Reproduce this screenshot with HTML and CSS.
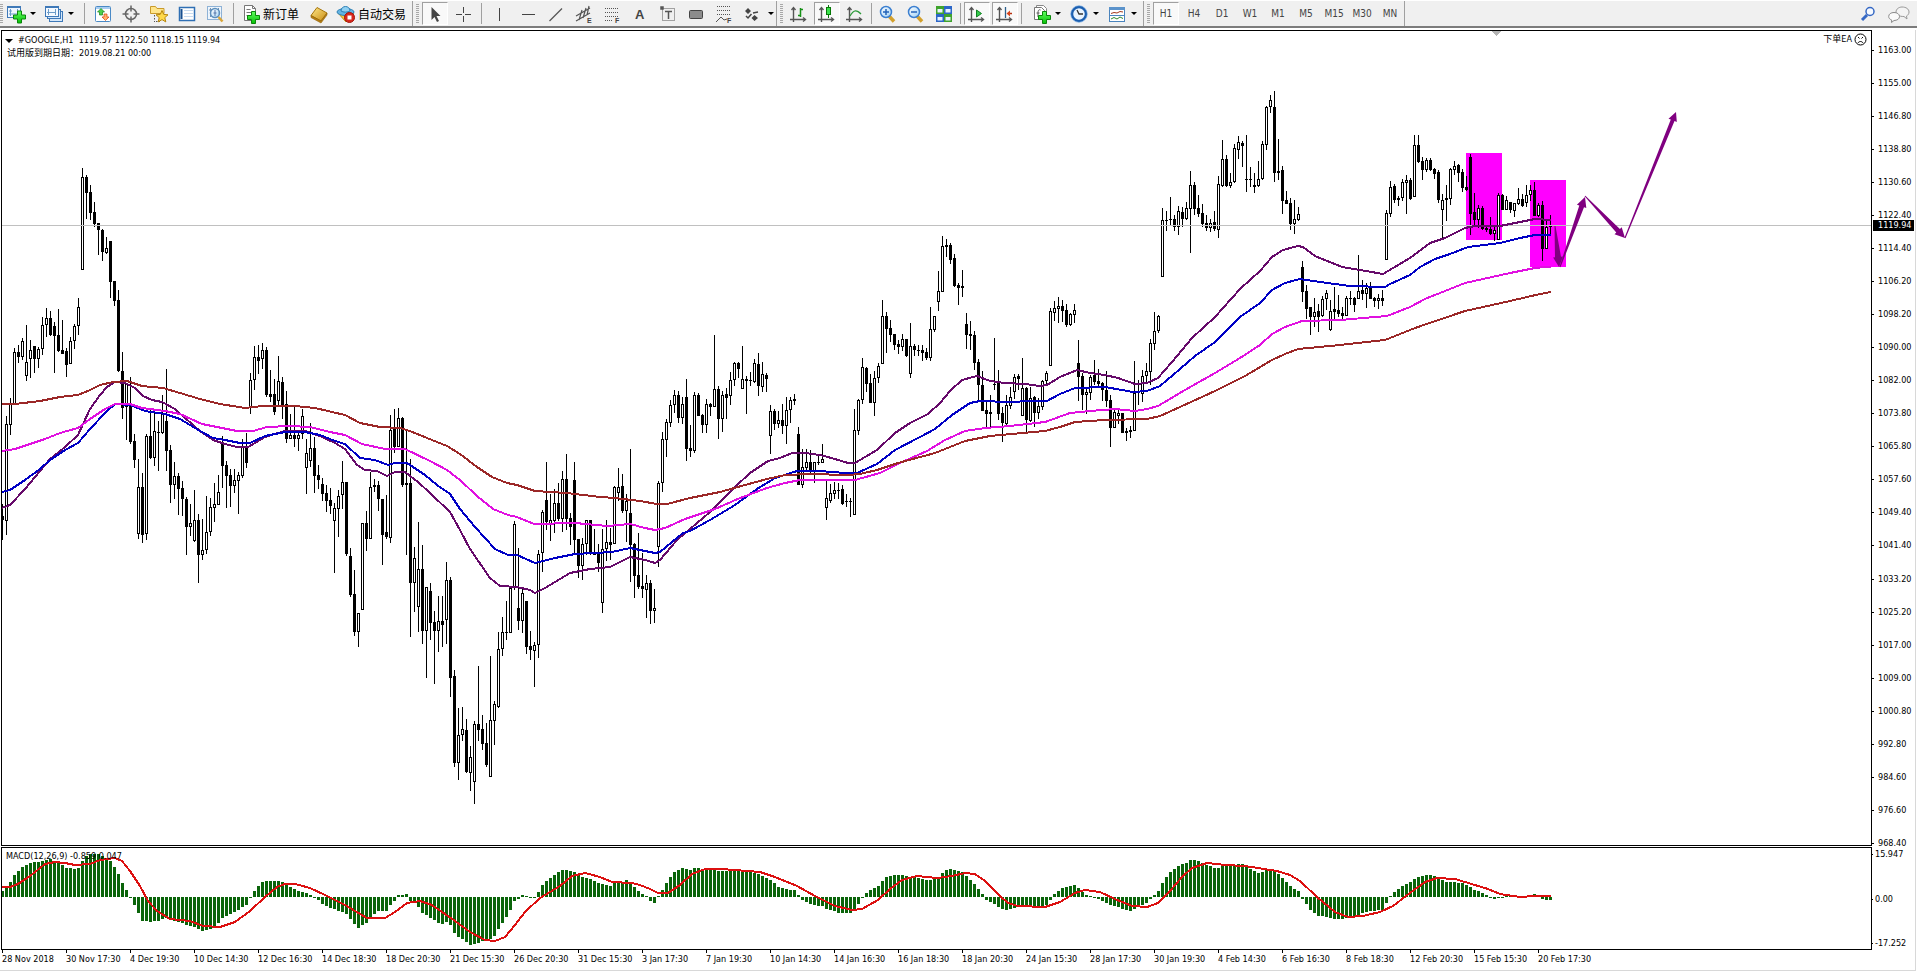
FILE: index.html
```html
<!DOCTYPE html>
<html lang="zh-CN">
<head>
<meta charset="utf-8">
<meta name="viewport" content="width=device-width, initial-scale=1">
<title>#GOOGLE,H1</title>
<link rel="stylesheet" href="styles.css">
</head>
<body>
<svg class="defs" aria-hidden="true">
  <defs>
    <linearGradient id="gold" x1="0" y1="0" x2="1" y2="1"><stop offset="0" stop-color="#ffe98a"/><stop offset="1" stop-color="#c88a10"/></linearGradient>
    <linearGradient id="green" x1="0" y1="0" x2="0" y2="1"><stop offset="0" stop-color="#5fff5f"/><stop offset="1" stop-color="#06c006"/></linearGradient>
    <linearGradient id="lens" x1="0" y1="0" x2="1" y2="1"><stop offset="0" stop-color="#ffffff"/><stop offset="1" stop-color="#9ed0f5"/></linearGradient>
    <path id="plus" d="M4 0h4v4h4v4h-4v4h-4v-4h-4v-4h4z" fill="url(#green)" stroke="#0b860b"/>
    <g id="axes" fill="none" stroke="#555" stroke-width="1.4"><path d="M4.5 4v14M1 15.500h15"/><path d="M2.500 6l2-2.500 2 2.500M14 13.500l2.500 2-2.500 2"/></g>
  </defs>
</svg>

<header class="toolbar">
  <div class="group">
    <span class="grip"></span>
    <div class="combos first">
      <div class="combo">
        <button class="tool" aria-label="新图表"><svg viewBox="0 0 20 20"><rect x="1.500" y="2.500" width="13" height="11" fill="#eef6ff" stroke="#3f79b8"/><path d="M1 3h14" stroke="#3f79b8" stroke-width="2"/><path d="M4.500 5v7M3 7h3M11.500 5v7M3 10h9" stroke="#6d9cc8" fill="none"/><use href="#plus" x="7.500" y="7"/></svg></button>
        <button class="drop" aria-label="新图表菜单"></button>
      </div>
      <div class="combo">
        <button class="tool" aria-label="配置文件"><svg viewBox="0 0 20 20"><rect x="5.500" y="7.500" width="13" height="10" fill="#d6e8fa" stroke="#3f79b8"/><rect x="3.500" y="5.500" width="13" height="9" fill="#d6e8fa" stroke="#3f79b8"/><rect x="1.500" y="2.500" width="13" height="10" fill="#f4f9ff" stroke="#3f79b8"/><path d="M1 3h14" stroke="#3f79b8" stroke-width="2"/><path d="M4.500 5v6M11.500 5v6M3 8.500h9" stroke="#6d9cc8"/></svg></button>
        <button class="drop" aria-label="配置文件菜单"></button>
      </div>
    </div>
    <span class="sep"></span>
    <button class="tool" aria-label="市场报价"><svg viewBox="0 0 20 20"><rect x="2.500" y="2.500" width="15" height="15" rx="1" fill="#fff" stroke="#4a8ac6"/><rect x="3" y="3" width="14" height="2" fill="#a9cdf0"/><path d="M8 4.500l3.500 3.500h-2v3h-3v-3h-2z" fill="#4cd04c" stroke="#17851a" stroke-width=".7"/><path d="M12.500 16.500l3.500-3.500h-2v-3h-3v3h-2z" fill="#ffb06a" stroke="#d8420c" stroke-width=".7"/></svg></button>
    <button class="tool" aria-label="数据窗口"><svg viewBox="0 0 20 20"><circle cx="10" cy="10" r="5.500" fill="none" stroke="#666" stroke-width="1.500"/><path d="M10 1.500v6M10 12.500v6M1.500 10h6M12.500 10h6" stroke="#666" stroke-width="1.500"/></svg></button>
    <button class="tool" aria-label="导航"><svg viewBox="0 0 20 20"><path d="M1.500 9.500v-7h5l1.500 2h7v5z" fill="#ffe58a" stroke="#c99a2a"/><path d="M5.500 11v7M7 17.500h4" stroke="#555" stroke-dasharray="1.500 1.500"/><path d="M13 6.500l1.700 3.900 4.300.4-3.200 2.800 1 4.300-3.800-2.300-3.800 2.300 1-4.300-3.200-2.800 4.300-.4z" fill="#ffd94a" stroke="#b8860b"/></svg></button>
    <button class="tool" aria-label="终端"><svg viewBox="0 0 20 20"><rect x="2.500" y="3.500" width="15" height="13" fill="#fff" stroke="#2f6fb4" stroke-width="1.500"/><path d="M4.500 5v10" stroke="#174f90" stroke-width="2"/><path d="M7 6.500h9M7 9.500h9M7 12.500h9" stroke="#c8dbf0"/></svg></button>
    <button class="tool" aria-label="策略测试"><svg viewBox="0 0 20 20"><rect x="2.500" y="2.500" width="14" height="13" fill="#eef5fc" stroke="#8eb2d6"/><path d="M5.500 4v9M4 6h3M13.500 4v7" stroke="#7092b5"/><circle cx="10" cy="9" r="4.500" fill="url(#lens)" fill-opacity=".8" stroke="#5d8fbd" stroke-width="1.500"/><path d="M10 6v6M8.500 9h3" stroke="#5577aa"/><path d="M13.500 13l4 4.500" stroke="#d9a53a" stroke-width="2.500"/></svg></button>
    <span class="sep"></span>
    <button class="tool labelled"><svg viewBox="0 0 20 20"><path d="M3.500 1.500h8l3 3v12h-11z" fill="#fff" stroke="#777"/><path d="M11.500 1.500v3h3M5.500 5.500h4M5.500 8.500h7M5.500 11.500h4" fill="none" stroke="#777"/><use href="#plus" x="6.500" y="7.500"/></svg><span>新订单</span></button>
    <button class="tool" aria-label="编辑器"><svg viewBox="0 0 20 20"><path d="M2 11.500l6-8 10 5.500-6 8z" fill="url(#gold)" stroke="#a8760c"/><path d="M2 11.500v2l10 5.500 6-8v-2l-6 8z" fill="#b97f10" stroke="#8f620a" stroke-width=".6"/></svg></button>
    <button class="tool labelled"><svg viewBox="0 0 20 20"><path d="M2 9l8 9 8-9z" fill="#f4c93c" stroke="#c08a14"/><ellipse cx="9.500" cy="8" rx="8.500" ry="3.500" fill="#63b4e4" stroke="#2c7fb4"/><path d="M5 7c0-6 9-6 9 0-2 1.500-7 1.500-9 0z" fill="#8fd0f2" stroke="#2c7fb4"/><circle cx="13.500" cy="13.500" r="5" fill="#d9281c" stroke="#a31108"/><rect x="11.500" y="11.500" width="4" height="4" fill="#fff"/></svg><span>自动交易</span></button>
  </div>

  <div class="group">
    <span class="grip"></span>
    <button class="tool pressed" aria-label="光标"><svg viewBox="0 0 20 20"><path d="M6.500 3v13l3-3 2.500 5 2-1-2.500-5h4z" fill="#444"/></svg></button>
    <button class="tool" aria-label="十字准线"><svg viewBox="0 0 20 20"><path d="M10.500 3v6M10.500 12v6M3 10.500h6M12 10.500h6" stroke="#444"/></svg></button>
    <span class="sep"></span>
    <button class="tool" aria-label="垂直线"><svg viewBox="0 0 20 20"><path d="M9.500 4v13" stroke="#444"/></svg></button>
    <button class="tool" aria-label="水平线"><svg viewBox="0 0 20 20"><path d="M4 10.500h13" stroke="#444"/></svg></button>
    <button class="tool" aria-label="趋势线"><svg viewBox="0 0 20 20"><path d="M3.500 17L16 4.500" stroke="#555" stroke-width="1.300"/></svg></button>
    <button class="tool" aria-label="等距通道"><svg viewBox="0 0 20 20"><path d="M2 12L16 4M2 17L16 9M5 16l3-10M9 14l3-10M13 11l2-9" stroke="#555" stroke-width="1.200"/><text x="13" y="19">E</text></svg></button>
    <button class="tool" aria-label="斐波那契回调"><svg viewBox="0 0 20 20"><path d="M3 4.500h14M3 8.500h14M3 12.500h14M3 16.500h8" stroke="#555" stroke-dasharray="1 1"/><text x="13" y="19">F</text></svg></button>
    <button class="tool" aria-label="文字"><svg viewBox="0 0 20 20"><text class="big" x="5" y="15">A</text></svg></button>
    <button class="tool" aria-label="文字标签"><svg viewBox="0 0 20 20"><rect x="4.500" y="4.500" width="12" height="12" fill="none" stroke="#555" stroke-dasharray="1 1"/><path d="M3 3h2v2h-2zM7 7.500h7M10.500 7v8" stroke="#555" stroke-width="1.500" fill="#555"/></svg></button>
    <button class="tool" aria-label="矩形"><svg viewBox="0 0 20 20"><rect x="3.500" y="6.500" width="13" height="8" rx="1" fill="#8c8c8c" stroke="#444"/></svg></button>
    <button class="tool" aria-label="斐波那契扩展"><svg viewBox="0 0 20 20"><path d="M3 2.500h14M3 6.500h14M3 10.500h14" stroke="#555" stroke-dasharray="1 1"/><path d="M2 18l5-5 3 3 3-1" fill="none" stroke="#555"/><text x="13" y="19">F</text></svg></button>
    <button class="tool" aria-label="箭头"><svg viewBox="0 0 20 20"><path d="M6 4l3 3-3 3-3-3zM12.500 11l3.500 3-3.500 3-3-3z" fill="#444"/><path d="M4 12l2 2 3.500-4M11 9l5-1" fill="none" stroke="#444" stroke-width="1.500"/></svg></button>
    <button class="drop" aria-label="箭头菜单"></button>
  </div>

  <div class="group tight">
    <span class="grip"></span>
    <button class="tool" aria-label="柱状图"><svg viewBox="0 0 20 20"><use href="#axes"/><path d="M11.500 4v9M9 11.500h2.500M11.500 5.500h2.500" stroke="#169016" stroke-width="1.500"/></svg></button>
    <button class="tool pressed" aria-label="蜡烛图"><svg viewBox="0 0 20 20"><use href="#axes"/><path d="M11.500 1v13" stroke="#087808"/><rect x="9.500" y="3.500" width="4" height="7" fill="#38e04a" stroke="#087808"/></svg></button>
    <button class="tool" aria-label="折线图"><svg viewBox="0 0 20 20"><use href="#axes"/><path d="M5 12c4-7 7-6 11-2" fill="none" stroke="#2d9a3a" stroke-width="1.300"/></svg></button>
    <span class="sep"></span>
    <button class="tool" aria-label="放大"><svg viewBox="0 0 20 20"><path d="M11 12l5 5.500" stroke="#d3a02c" stroke-width="3.500"/><circle cx="8" cy="8" r="5.500" fill="url(#lens)" stroke="#3b7fd0" stroke-width="1.500"/><path d="M5 8h6M8 5v6" stroke="#2563b8" stroke-width="1.500"/></svg></button>
    <button class="tool" aria-label="缩小"><svg viewBox="0 0 20 20"><path d="M11 12l5 5.500" stroke="#d3a02c" stroke-width="3.500"/><circle cx="8" cy="8" r="5.500" fill="url(#lens)" stroke="#3b7fd0" stroke-width="1.500"/><path d="M5 8h6" stroke="#2563b8" stroke-width="1.500"/></svg></button>
    <button class="tool" aria-label="平铺窗口"><svg viewBox="0 0 20 20"><path d="M2 2h8v8h-8zM10 10h8v8h-8z" fill="#3fa32c"/><path d="M10 2h8v8h-8zM2 10h8v8h-8z" fill="#2b66c8"/><path d="M3.500 5h5v3.500h-5zM11.500 5h5v3.500h-5zM3.500 13h5v3.500h-5zM11.500 13h5v3.500h-5z" fill="#e8f3ff"/></svg></button>
    <span class="sep"></span>
    <button class="tool pressed" aria-label="自动滚动"><svg viewBox="0 0 20 20"><use href="#axes"/><path d="M9.500 6l5 3.500-5 3.500z" fill="#33c94a" stroke="#118022"/></svg></button>
    <button class="tool pressed" aria-label="图表平移"><svg viewBox="0 0 20 20"><use href="#axes"/><path d="M10.500 3v11" stroke="#2b5f8a" stroke-width="1.300"/><path d="M17 9.500h-3" stroke="#b83210" stroke-width="1.500"/><path d="M11.500 9.500l3.500-3v6z" fill="#d6451c"/></svg></button>
    <span class="sep"></span>
    <div class="combos">
      <div class="combo">
        <button class="tool" aria-label="指标"><svg viewBox="0 0 20 20"><path d="M5.500 1.500h7l3 3v8h-10z" fill="#fff" stroke="#888"/><path d="M3.500 3.500h7l3 3v9h-10z" fill="#fff" stroke="#777"/><path d="M9.500 6c-2-1-2.500 1-2.500 3v4M5.500 9h3" fill="none" stroke="#555"/><use href="#plus" x="7.500" y="7.500"/></svg></button>
        <button class="drop" aria-label="指标菜单"></button>
      </div>
      <div class="combo">
        <button class="tool" aria-label="周期"><svg viewBox="0 0 20 20"><circle cx="10" cy="10" r="7" fill="#e9f4ff" stroke="#1c5fb0" stroke-width="2.500"/><circle cx="10" cy="10" r="8.300" fill="none" stroke="#6fa6e2" stroke-width=".6"/><path d="M8 6l2 4h4" fill="none" stroke="#333" stroke-width="1.300"/></svg></button>
        <button class="drop" aria-label="周期菜单"></button>
      </div>
      <div class="combo">
        <button class="tool" aria-label="模板"><svg viewBox="0 0 20 20"><rect x="2.500" y="3.500" width="15" height="14" fill="#fff" stroke="#4a84bd"/><path d="M2 4.500h16" stroke="#5b93cb" stroke-width="3"/><path d="M2 11.500h16" stroke="#4a84bd"/><path d="M4 9.500l3-1 3 .5 3-1.500 3 .5" fill="none" stroke="#a33a1d"/><path d="M4 15l3-1.500 3 1.500 3-2 3 1.500" fill="none" stroke="#2d8a2d"/></svg></button>
        <button class="drop" aria-label="模板菜单"></button>
      </div>
    </div>
  </div>

  <div class="group periods">
    <span class="grip"></span>
    <button class="tool pressed">H1</button>
    <button class="tool">H4</button>
    <button class="tool">D1</button>
    <button class="tool">W1</button>
    <button class="tool">M1</button>
    <button class="tool">M5</button>
    <button class="tool">M15</button>
    <button class="tool">M30</button>
    <button class="tool">MN</button>
  </div>

  <div class="right">
    <button class="tool" aria-label="搜索"><svg viewBox="0 0 20 20"><path d="M9 11l-5 5" stroke="#3568c4" stroke-width="3"/><circle cx="12" cy="7.500" r="4" fill="#f5f9ff" stroke="#3568c4" stroke-width="1.500"/></svg></button>
    <button class="tool wide" aria-label="聊天"><svg viewBox="0 0 24 20"><path d="M15 3c4 0 7 2 7 5 0 2-1 3-2.500 4l.5 3-3-2.500c-5 0-8-1.500-8-4.500s3-5 6-5z" fill="#f4f4f4" stroke="#999"/><path d="M7 8.500c3 0 5.500 1.500 5.500 4s-2.500 4-5.500 4l-2.500 2 .2-2.500c-2-.7-3-2-3-3.500 0-2.500 2.300-4 5.300-4z" fill="#fbfbfb" stroke="#8a8a8a"/></svg></button>
  </div>
</header>

<main class="chart">
  <section class="plot price" aria-label="价格">
    <svg class="canvas"><g id="price" transform="translate(-2,-31)"></g></svg>
    <div class="heading">
      <p><span class="fold"></span>#GOOGLE,H1&nbsp; 1119.57 1122.50 1118.15 1119.94</p>
      <p>试用版到期日期：2019.08.21 00:00</p>
    </div>
    <div class="expert">下单EA<svg viewBox="0 0 13 13"><circle cx="6.500" cy="6.500" r="5.500" fill="#fff" stroke="#000"/><path d="M4 4l1.500 1.500M9 4l-1.500 1.500M4 10c1-2 4-2 5 0" fill="none" stroke="#000"/></svg></div>
  </section>
  <div class="axis prices">
    <ol id="prices"></ol>
    <output class="last">1119.94</output>
  </div>
  <section class="plot macd" aria-label="MACD">
    <svg class="canvas"><g id="macd" transform="translate(-2,-848)"></g></svg>
    <p class="caption">MACD(12,26,9) -0.859 0.047</p>
  </section>
  <div class="axis levels">
    <ol><li>15.947</li><li>0.00</li><li>-17.252</li></ol>
  </div>
  <ol class="times" id="times"></ol>
</main>
<script src="chart.js"></script>
</body>
</html>
```
FILE: styles.css
```css
* { box-sizing: border-box; }
body {
  margin: 0;
  min-height: 100vh;
  display: flex;
  flex-direction: column;
  gap: 2px;
  background: #fff;
  color: #000;
  font: 9px/11px "DejaVu Sans Condensed", "DejaVu Sans", "Noto Sans CJK SC", sans-serif;
}
ol, p { margin: 0; padding: 0; list-style: none; }
.defs { position: absolute; width: 0; height: 0; }

.toolbar {
  display: flex;
  height: 28px;
  background: #f0f0f0;
  border-top: 1px solid #fff;
  border-bottom: 2px solid #7c7c7c;
}
.group {
  display: flex;
  align-items: center;
  border-right: 1px solid #a0a0a0;
}
.grip {
  width: 3px;
  height: 20px;
  margin: 0 2px 0 3px;
  background: repeating-linear-gradient(#a8a8a8 0 1px, #f0f0f0 1px 2px);
}
.group:first-child .grip { margin: 0; }
.sep { width: 1px; height: 21px; margin: 0 4px; background: #a0a0a0; }
.tight .sep { margin: 0 2px; }
.tool {
  display: flex;
  align-items: center;
  justify-content: center;
  width: 28px;
  height: 23px;
  padding: 0;
  border: 0;
  background: transparent;
  background-clip: padding-box;
  color: #444;
  font: inherit;
}
.tool svg { width: 20px; height: 20px; flex: none; }
.tool text { font: bold 7px "Liberation Sans", sans-serif; fill: #444; }
.tool text.big { font-size: 13px; }
.pressed {
  width: 26px;
  margin: 0 1px;
  background: #f9f9f9;
  border: 1px solid #fff;
  border-top-color: #a0a0a0;
  border-left-color: #a0a0a0;
}
.labelled {
  width: auto;
  gap: 2px;
  padding: 0 6px 0 3px;
  color: #000;
  font: 12px/16px "Noto Sans CJK SC", sans-serif;
}
.combos { display: flex; padding-left: 5px; }
.combos.first { padding-left: 1px; }
.combo { display: flex; margin-right: 4px; }
.combo .tool { width: 24px; }
.drop {
  display: flex;
  align-items: center;
  justify-content: center;
  width: 10px;
  height: 23px;
  padding: 0;
  border: 0;
  background: transparent;
}
.drop::before, .fold {
  content: "";
  border: 3px solid transparent;
  border-top-color: #000;
  border-bottom: 0;
}
.periods .tool { font-size: 10px; }
.right { display: flex; align-items: center; margin-left: auto; padding-right: 4px; gap: 3px; }
.right .wide svg { width: 24px; }

.chart {
  flex: 1;
  display: grid;
  grid-template: 1fr 103px 20px / 1fr 43px;
  row-gap: 0;
  padding-left: 1px;
  margin-right: 1px;
  margin-bottom: 1px;
  border-right: 1px solid #d8d8d8;
  border-bottom: 1px solid #d8d8d8;
}
.plot { position: relative; border: 1px solid #000; }
.price { margin-bottom: 1px; }
.canvas {
  position: absolute;
  inset: 0;
  width: 100%;
  height: 100%;
}
.heading { position: absolute; left: 4px; top: 3px; }
.heading p { display: flex; align-items: center; height: 13px; }
.fold { margin: 0 5px 0 -1px; border-width: 4px; border-bottom: 0; }
.heading p:last-child { padding-left: 1px; }
.expert {
  position: absolute;
  right: 4px;
  top: 2px;
  display: flex;
  align-items: center;
  gap: 2px;
}
.expert svg { width: 13px; height: 13px; }
.caption { position: absolute; left: 4px; top: 3px; }

.axis { position: relative; }
.axis ol {
  display: flex;
  flex-direction: column;
  justify-content: space-between;
  height: 100%;
}
.axis li { position: relative; padding-left: 6px; }
.axis li::before {
  content: "";
  position: absolute;
  left: 0;
  top: 5px;
  width: 2px;
  border-top: 1px solid #000;
}
.prices { margin-bottom: -2px; padding-top: 15px; }
.levels { padding: 2px 0 1px; }
.levels li { padding-left: 3px; }
.levels li::before { width: 1px; }
.last {
  position: absolute;
  left: 1px;
  right: 1px;
  top: 190px;
  padding-left: 5px;
  background: #000;
  color: #fff;
}
.times {
  grid-column: 1 / -1;
  display: flex;
  padding-left: 1px;
  overflow: hidden;
}
.times li {
  position: relative;
  flex: 0 0 64px;
  padding-top: 4px;
  white-space: nowrap;
}
.times li::before {
  content: "";
  position: absolute;
  left: 0;
  top: 0;
  height: 3px;
  border-left: 1px solid #000;
}

.grid-line { stroke: #c0c0c0; }
.zone { fill: #f0f; }
.wick, .solid { fill: #000; }
.hollow { fill: #fff; }
.ma { fill: none; stroke-width: 2; }
.slow { stroke: #9b2727; }
.mid { stroke: #e010e0; }
.fast { stroke: #0000c4; }
.quick { stroke: #660a6a; }
.arrow { fill: #800080; }
.shift { fill: #b4b4b4; }
.bars { fill: #0a640a; }
.signal { fill: none; stroke: #dc1010; stroke-width: 2; }
.crisp { shape-rendering: crispEdges; }
```
FILE: chart.js
```js
// Candles are "<u|d>high,open/close top,open/close bottom,low", three steps to a pixel below the block's base line.
const blocks = [
  [150, `d1062,1098,1110,1170 u798,822,1112,1155 u744,762,826,855 u595,606,762,762 d585,606,620,638 u565,574,620,630 u526,636,677,694 u571,600,627,684 d588,588,628,668 u590,596,628,654
  u502,526,596,616 u474,505,524,560 d484,504,554,557 d515,528,557,668 d478,555,602,605 d511,600,611,611 d595,603,644,680 u562,574,643,643 u523,529,574,596 u445,471,529,554
  u55,82,359,359 d76,81,128,206 d106,126,188,210 d157,186,221,230 d219,220,239,315 d238,240,305,332 u262,294,309,312 d273,273,395,443 d393,393,452,467 d420,450,664,665
  d606,663,773,806 u700,700,772,870 d681,765,875,881 d852,873,929,953 u928,1010,1153,1166 d969,1011,1154,1178 u853,859,1153,1169 d780,857,923,927 u790,843,923,948 d813,845,849,962
  u736,790,849,852 d657,813,902,963 d885,900,1004,1058 u936,978,1004,1048 d970,978,1016,1094 d994,1014,1048,1098 d1042,1047,1130,1214 u1062,1119,1130,1158 u1020,1110,1172,1177 d1093,1110,1214,1298
  u1106,1200,1214,1229 u1038,1146,1201,1212 u1045,1071,1147,1158 u1000,1062,1074,1116 u975,1026,1064,1064 d858,876,947,1014 d932,945,977,1074 d957,975,1007,1070 u956,990,1007,1030 u966,976,992,1092
  u868,890,977,984 d848,888,938,954 u668,690,774,792 u588,621,691,719 d586,621,632,671 u580,600,628,656 d590,600,734,742 d660,733,741,756 d687,732,785,796 u618,693,754,765
  d681,696,765,806 d723,763,866,878 u792,855,866,866 d770,855,868,890 u850,855,868,902 u777,799,853,868 u868,909,953,1032 u820,894,932,950 d862,894,977,1030 d944,975,990,1018
  d985,1002,1031,1054 d1005,1029,1052,1086 d1014,1050,1068,1092 u1058,1075,1114,1269 u1020,1038,1076,1160 u933,996,1036,1076 d995,996,1211,1218 d1194,1217,1334,1340 d1260,1332,1445,1457 u1390,1390,1445,1492
  u1120,1120,1381,1381 d1083,1119,1168,1203 u965,1011,1168,1168 u987,1006,1012,1026 d992,1006,1048,1082 d1046,1048,1154,1245 d1035,1146,1160,1166 u795,840,1165,1178 d777,832,892,908 u774,804,892,892`],
  [380, `d112,114,314,320 d150,308,314,525 d237,310,608,770 u501,534,608,695 u427,568,680,755 d494,567,752,792 u622,622,752,893 d610,632,728,780 d693,726,752,911 u648,723,752,816
  d648,723,734,800 u546,600,719,792 d591,600,893,950 d870,888,1148,1160 u984,1065,1148,1200 u980,1047,1064,1084 d1017,1050,1176,1178 u1098,1131,1178,1232 u1023,1032,1205,1271 d857,1032,1049,1082
  d1005,1047,1091,1110 d1030,1089,1155,1161 u828,1020,1192,1192 u963,972,1022,1095 u756,807,980,984 u711,756,806,828 d662,755,759,780 u618,624,758,758 u423,432,620,630 d504,684,722,750
  u620,639,722,760 d663,663,800,822 d752,798,811,839 u786,795,812,920 u510,522,796,833 u390,396,518,576 d246,360,426,450 u342,420,431,482 u327,369,422,460 d309,369,416,422
  u273,297,416,456 d222,297,416,450 d398,414,442,495 d246,300,479,524 d476,478,557,593 u474,492,557,600 u420,421,493,525 d420,421,520,524 d447,519,524,524 d492,518,548,575
  u446,507,668,698 u420,486,508,543 d444,486,494,540 u318,321,493,493 u264,321,338,362 d282,318,392,398 u342,363,392,486 d207,399,496,606 d490,492,587,654 d459,585,621,626
  d520,618,626,654 u585,609,629,713 d600,609,692,731 u627,684,692,728 u303,309,500,560 u156,177,308,335 u117,126,179,230 u60,75,128,140 u30,45,76,98 d33,45,113,130
  u52,72,113,132 d-3,51,206,242 d135,204,213,230 u37,45,212,218 d40,45,108,108 d103,105,136,158 u58,72,136,158 d70,71,80,107 u-135,27,80,82 d18,27,116,177
  u33,45,116,156 d24,42,54,116 u-24,1,49,74 u-53,-51,1,17 d-53,-51,-32,-5 u-102,-2,28,28 d-12,-3,2,101 d-24,0,3,17 u-63,-51,7,9 d-81,-48,17,47`],
  [220, `u426,462,500,515 d460,464,476,516 u555,573,647,702 d567,573,611,630 u572,600,611,625 d552,600,617,643 u532,569,617,671 u532,540,570,608 u523,536,543,554 d622,642,794,795
  u688,741,794,804 u688,726,743,750 d690,726,757,760 u725,727,757,788 d705,725,729,735 u672,717,728,728 u783,834,863,899 u792,819,843,850 u785,811,821,836 d788,810,814,836
  d794,807,851,855 d822,843,846,862 d834,842,846,891 u567,630,886,886 u538,540,632,644 u414,441,541,552 d441,444,492,515 d462,489,548,548 u453,474,548,588 u429,438,475,489
  u240,288,431,432 d276,288,326,399 d300,324,344,365 d342,342,375,390 d360,371,381,402 u342,357,380,393 d357,357,408,410 u309,378,461,473 d372,378,390,407 d375,389,392,407
  d374,389,399,422 d384,396,414,419 u261,327,413,422 u288,289,329,335 u153,213,245,273 u48,78,215,216 d57,75,80,110 d69,75,119,132 d102,114,197,200 d189,195,204,255
  d150,198,203,230 d279,312,345,387 d303,342,347,390 d333,345,429,450 d417,426,495,540 d453,495,572,572 d542,570,581,623 d525,576,581,623 d354,491,494,510 d450,486,582,600
  d560,579,608,665 u525,555,611,614 u500,531,557,567 u462,471,516,537 d462,468,476,510 u414,504,587,587 d500,504,599,638 u500,534,602,605 d527,531,578,620 u533,557,578,596
  u480,484,560,570 u454,459,482,494 u264,273,437,437 u242,264,278,303 u231,258,266,309 d240,258,272,305 d251,270,315,321 u278,282,315,318 u252,270,284,308 d360,429,470,542
  d459,468,524,570 u504,516,524,581 u465,471,518,539 d420,465,486,495 d447,484,491,500 d486,489,510,542 d453,510,543,560 d525,540,623,681 u564,576,623,623 u569,579,587,612
  d579,579,638,638 d624,633,638,663 d617,629,635,654 u423,519,632,632 d480,516,520,555 u450,467,521,545 u429,453,468,490 u357,369,456,495 u276,333,371,390 u285,288,333,338`],
  [80, `u384,421,590,590 d393,420,423,452 d351,418,421,435 d405,417,440,453 u378,393,440,465 d382,395,416,440 u366,384,416,420 u273,315,386,518 d307,315,386,404 d345,384,402,410
  d372,399,431,440 d405,429,444,452 u417,430,443,455 d393,427,446,452 u288,312,451,473 u180,237,317,320 d225,237,318,321 u279,306,318,325 u192,204,307,308 u168,186,209,237
  d183,189,198,260 d165,297,300,335 d261,297,300,320 d279,315,320,338 u243,296,319,320 u183,192,297,300 u78,80,195,210 u45,60,80,98 d33,81,280,305 d177,272,278,300
  d258,270,362,402 d332,360,371,371 d354,369,431,450 u360,417,432,461 u381,402,420,424 d543,561,635,665 d615,633,686,716 d680,681,711,764 u654,696,710,740 d672,694,711,755
  u648,657,707,710 u630,639,657,690 u660,693,749,753 d621,686,695,720 d645,690,702,710 d680,699,707,720 u648,654,707,708 d633,654,657,675 d651,654,674,695 u525,633,656,657
  d600,630,641,660 u609,623,641,684 d606,621,656,657 d651,654,662,680 u642,654,662,686 d630,654,662,678 u390,400,539,540 u303,321,402,410 d312,318,360,370 u348,353,359,377
  u297,306,353,363 u285,300,309,402 d294,300,357,361 u165,195,350,350 d165,195,245,248 d231,243,269,299 u234,240,269,275 d234,240,270,272 d264,266,281,297 d270,276,359,370
  u342,360,389,475 d315,353,359,423 u264,267,356,375 u243,258,269,285 d252,255,279,305 d267,276,324,335 d288,320,330,332 d222,231,402,465 d339,396,419,440 u375,384,419,443
  d378,384,446,449 d435,444,449,455 d411,447,462,465 u438,450,462,483 u339,345,479,480 d341,345,389,389 u348,360,389,390 d366,366,390,400 u368,369,392,410 u324,357,371,375
  d342,357,377,380 u315,345,368,380 u315,330,345,362 d306,330,407,408 u370,375,407,410 d363,375,506,543 u420,441,506,508 u405,435,442,462`]
];

const averages = {
  quick: "2,508 10,505 25,489 40,471 50,459 65,447 78,435 90,409 100,395 107,387 115,382 125,383 135,388 143,396 152,400 162,402 175,409 185,418 200,431 213,440 225,444 237,447 248,447 265,437 285,431 305,431 320,436 335,443 345,449 357,465 365,470 377,471 387,476 395,472 405,472 418,482 430,493 450,512 460,530 470,549 490,578 500,586 517,587 530,590 535,593 545,588 570,573 590,569 610,567 630,557 645,560 655,563 660,560 677,540 690,529 710,512 735,487 750,473 768,461 780,458 792,453 805,453 820,455 835,459 848,463 855,463 865,457 877,450 895,433 910,423 928,414 940,403 950,391 962,380 977,376 990,381 1005,383 1025,384 1040,386 1047,385 1060,377 1077,370 1090,373 1105,375 1118,378 1135,384 1147,383 1158,378 1172,362 1192,338 1215,317 1240,289 1260,271 1272,257 1283,250 1298,246 1303,247 1315,256 1342,267 1360,270 1383,274 1388,271 1410,258 1430,243 1445,238 1465,228 1475,226 1500,226 1520,222 1535,219 1551,220",
  fast: "2,492 10,490 25,480 40,469 50,460 65,450 78,443 90,429 105,413 115,404 130,405 145,411 165,414 180,419 200,431 213,438 225,440 240,443 250,443 265,436 285,432 305,432 320,435 335,441 345,444 360,458 375,460 388,465 395,463 407,463 425,475 437,485 450,494 460,509 475,527 495,549 508,555 517,555 535,563 555,558 575,554 612,552 630,548 645,551 655,553 660,552 672,542 683,533 690,531 710,520 735,505 757,489 775,478 797,471 820,471 845,473 857,473 877,464 895,450 920,437 935,429 952,415 970,403 980,401 1010,402 1030,401 1047,401 1060,394 1075,388 1105,387 1133,392 1147,391 1160,386 1180,369 1195,356 1215,342 1240,317 1260,303 1272,290 1285,283 1300,279 1320,282 1350,286 1385,287 1390,284 1410,275 1420,267 1435,259 1450,254 1468,247 1500,243 1520,238 1535,235 1551,235",
  mid: "2,451 15,449 30,444 45,439 60,433 78,428 90,419 105,409 115,404 130,404 142,408 165,411 180,414 202,424 222,428 237,431 253,431 267,427 290,426 310,427 330,432 345,435 362,444 385,449 405,449 430,461 447,470 460,480 477,496 493,509 508,515 517,517 534,524 575,523 607,526 630,524 645,528 655,530 665,528 685,519 715,509 740,498 767,488 785,483 800,480 855,480 880,473 900,463 927,451 945,440 965,431 985,428 1010,426 1045,422 1070,413 1090,411 1115,409 1135,411 1147,409 1158,406 1185,390 1215,373 1240,358 1260,345 1272,334 1285,327 1302,321 1340,320 1387,316 1410,307 1425,299 1465,283 1510,273 1535,268 1545,267 1551,267",
  slow: "2,404 15,404 40,401 60,397 78,395 90,390 100,385 113,382 127,381 142,386 163,388 180,393 200,399 220,404 245,408 262,406 295,406 315,408 345,415 360,423 380,427 400,428 410,431 427,438 447,446 460,454 477,467 492,477 507,483 517,485 535,491 567,493 600,497 615,498 640,501 657,504 667,504 690,498 720,492 745,485 767,479 785,475 810,474 848,475 860,474 877,470 898,463 935,453 965,441 990,436 1045,431 1060,427 1075,422 1105,420 1147,419 1160,416 1180,407 1215,391 1245,376 1272,360 1285,354 1298,349 1340,345 1385,340 1415,328 1465,311 1510,301 1540,294 1551,292"
};

const signal = "2,887 10,887 18,884 30,876 45,864 55,862 65,863 75,865 90,864 100,860 115,858 122,861 130,871 140,886 148,901 157,911 170,919 190,921 203,926 220,927 235,922 250,911 265,897 277,887 285,884 295,884 310,888 325,895 345,905 355,911 367,918 385,918 395,912 407,903 420,901 432,905 455,921 470,932 485,940 495,941 505,937 515,925 525,912 540,898 560,886 572,876 585,873 600,877 612,882 632,883 640,885 650,889 658,893 668,893 680,885 692,874 705,869 722,869 760,872 775,877 797,886 815,896 835,906 852,910 862,909 878,900 890,889 902,880 917,876 937,878 952,876 965,873 975,874 985,881 1000,896 1008,903 1018,906 1045,907 1060,902 1075,893 1085,890 1100,892 1115,899 1132,906 1147,907 1158,903 1170,891 1182,877 1192,868 1207,863 1225,865 1245,866 1277,871 1290,875 1300,881 1317,897 1335,912 1348,917 1363,916 1380,912 1393,906 1410,893 1425,882 1437,878 1455,879 1475,885 1488,889 1500,894 1520,897 1535,896 1551,896";

// Histogram: "bar index:height", straight between entries.
const histogram = "0:6 1:10 2:15 3:22 4:26 5:30 6:32 7:34 9:35 11:37 12:38 13:36 14:34 15:32 16:29 18:28 19:29 20:36 21:41 22:43 24:43 25:41 26:38 27:36 28:30 29:23 30:14 31:7 32:-1 33:-8 34:-16 35:-24 37:-25 38:-24 39:-24 41:-21 42:-23 44:-25 47:-29 49:-32 50:-34 51:-33 52:-32 53:-30 54:-26 55:-21 57:-17 59:-13 60:-10 61:-8 62:-1 63:6 64:11 65:15 66:16 69:16 70:15 72:10 74:6 76:4 77:2 78:-1 79:-3 80:-7 82:-11 84:-14 86:-17 87:-22 88:-27 89:-31 90:-28 91:-26 92:-20 93:-17 94:-14 96:-14 97:-8 98:-4 99:2 100:2 101:3 102:-4 103:-5 104:-10 105:-16 107:-21 109:-26 110:-27 111:-25 112:-28 113:-36 114:-40 116:-45 117:-48 119:-46 120:-44 122:-42 123:-39 124:-32 126:-20 127:-13 128:-4 129:-2 130:2 131:1 132:-1 133:-1 134:5 135:12 136:16 138:22 140:27 141:27 142:26 144:23 145:20 147:18 149:14 150:13 152:11 153:16 155:15 156:17 157:15 158:10 159:6 160:3 161:1 162:-4 163:-6 164:1 165:7 166:14 167:20 168:25 169:27 170:29 172:27 173:29 175:28 178:27 179:26 184:27 186:25 188:24 190:21 192:17 194:10 195:9 197:7 198:7 199:2 200:-3 202:-7 204:-9 205:-9 206:-12 208:-14 209:-16 212:-16 213:-12 214:-7 215:-1 216:4 218:9 219:11 220:16 221:20 223:22 225:22 227:20 228:21 229:19 231:17 232:17 233:19 234:20 235:24 236:27 237:28 238:27 240:25 241:21 242:17 243:13 244:8 245:3 246:-3 248:-7 249:-10 250:-12 251:-13 253:-11 255:-9 258:-9 260:-10 261:-8 262:-3 263:3 264:6 265:9 266:10 268:12 269:9 270:5 271:2 273:-1 275:-4 277:-8 279:-10 280:-12 282:-14 283:-12 284:-10 286:-6 287:-2 288:2 289:6 290:14 291:20 292:25 294:31 296:34 297:37 299:36 301:32 303:29 304:29 305:31 308:32 310:33 311:31 312:28 314:24 315:25 317:28 318:27 319:23 320:19 321:15 322:11 323:8 324:6 325:-2 326:-7 327:-13 328:-16 329:-19 331:-20 333:-22 335:-22 336:-21 338:-20 340:-16 342:-14 345:-13 346:-6 347:1 348:5 350:11 352:15 354:20 356:22 358:21 359:20 360:17 361:15 365:14 367:10 368:7 370:4 371:2 372:-1 373:-2 375:-1 376:1 378:1 381:1 382:2 383:3 384:1 385:-2 386:-3 387:-3";

const times = ["28 Nov 2018", "30 Nov 17:30", "4 Dec 19:30", "10 Dec 14:30", "12 Dec 16:30", "14 Dec 18:30", "18 Dec 20:30", "21 Dec 15:30", "26 Dec 20:30", "31 Dec 15:30", "3 Jan 17:30", "7 Jan 19:30", "10 Jan 14:30", "14 Jan 16:30", "16 Jan 18:30", "18 Jan 20:30", "24 Jan 15:30", "28 Jan 17:30", "30 Jan 19:30", "4 Feb 14:30", "6 Feb 16:30", "8 Feb 18:30", "12 Feb 20:30", "15 Feb 15:30", "20 Feb 17:30"];
const prices = ["1163.00", "1155.00", "1146.80", "1138.80", "1130.60", "1122.40", "1114.40", "1106.20", "1098.20", "1090.00", "1082.00", "1073.80", "1065.80", "1057.60", "1049.40", "1041.40", "1033.20", "1025.20", "1017.00", "1009.00", "1000.80", "992.80", "984.60", "976.60", "968.40"];

const step = 4, left = 2;
const box = (x, y, w, h) => `M${x} ${y}h${w}v${h}h${-w}z`;

let wicks = "", solid = "", hollow = "", index = 0;
for (const [base, rows] of blocks) {
  for (const row of rows.trim().split(/\s+/)) {
    const [high, top, bottom, low] = row.slice(1).split(",").map(v => base + Math.round(v / 3));
    const x = left + step * index++;
    const height = Math.max(1, bottom - top);
    wicks += box(x, high, 1, Math.max(1, low - high));
    solid += box(x - 1, top, 3, height);
    if (row[0] === "u" && height > 2) hollow += box(x, top + 1, 1, height - 2);
  }
}

// Shaft widens from the tail to the barbs of the head.
function arrow(x1, y1, x2, y2, shaft, head) {
  const len = Math.hypot(x2 - x1, y2 - y1);
  const ux = (x2 - x1) / len, uy = (y2 - y1) / len;
  const at = (along, side) => `${(x1 + ux * along - uy * side).toFixed(1)},${(y1 + uy * along + ux * side).toFixed(1)}`;
  const neck = len - head;
  const points = [at(0, -.5), at(neck, -shaft), at(neck, -head / 2), at(len, 0), at(neck, head / 2), at(neck, shaft), at(0, .5)];
  return `<polygon class="arrow" points="${points.join(" ")}"/>`;
}

document.getElementById("price").innerHTML = `
  <path class="shift crisp" d="M1492 31h9l-4.500 5z"/>
  <path class="zone crisp" d="${box(1466, 153, 36, 87)}${box(1530, 180, 36, 87)}"/>
  <path class="wick crisp" d="${wicks}"/>
  <path class="solid crisp" d="${solid}"/>
  <path class="hollow crisp" d="${hollow}"/>
  <path class="grid-line crisp" d="M0 225.500H9999"/>
  ${["quick", "fast", "mid", "slow"].map(n => `<polyline class="ma crisp ${n}" points="${averages[n]}"/>`).join("")}
  ${arrow(1555, 226, 1559, 267, 3, 10)}
  ${arrow(1560, 267, 1585, 197, 2.5, 10)}
  ${arrow(1585, 196, 1625, 238, 2.5, 10)}
  ${arrow(1625, 238, 1676, 112, 2, 9)}`;

const keys = histogram.split(" ").map(p => p.split(":").map(Number));
let bars = "";
for (let i = 0; i < keys.length; i++) {
  const [k, h] = keys[i], [nk, nh] = keys[i + 1] || [k + 1, h];
  for (let j = k; j < nk; j++) {
    const v = Math.round(h + (nh - h) * (j - k) / (nk - k)) || 1;
    bars += box(left + step * j - 1, v > 0 ? 897 - v : 897, 3, Math.abs(v));
  }
}
document.getElementById("macd").innerHTML = `
  <path class="bars crisp" d="${bars}"/>
  <polyline class="signal crisp" points="${signal}"/>`;

const list = items => items.map(t => `<li>${t}</li>`).join("");
document.getElementById("prices").innerHTML = list(prices);
document.getElementById("times").innerHTML = list(times);
```
